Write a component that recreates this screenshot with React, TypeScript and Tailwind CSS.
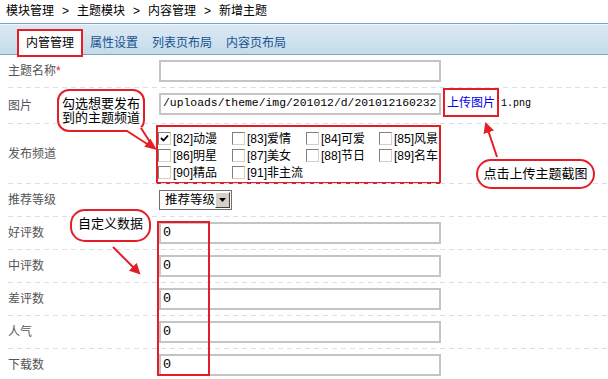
import React from 'react';

const RED = '#e41e26';

const channels: [string, string, boolean][] = [
  ['[82]', '动漫', true],
  ['[83]', '爱情', false],
  ['[84]', '可爱', false],
  ['[85]', '风景', false],
  ['[86]', '明星', false],
  ['[87]', '美女', false],
  ['[88]', '节日', false],
  ['[89]', '名车', false],
  ['[90]', '精品', false],
  ['[91]', '非主流', false],
];

function Sep() {
  return <div className="h-px ml-[8px] bg-[repeating-linear-gradient(90deg,#d5e1eb_0_5px,transparent_5px_9px)]" />;
}

function Label({ children }: { children: React.ReactNode }) {
  return <div className="w-[159px] shrink-0 pl-[8px] text-[12px] leading-[16px] text-[#555]">{children}</div>;
}

function TextInput({ value = '', big = false }: { value?: string; big?: boolean }) {
  return (
    <div
      className={
        big
          ? "w-[282px] h-[22px] border-2 border-[#c4c4c4] bg-white flex items-center pl-[2px] overflow-hidden whitespace-nowrap font-['Liberation_Mono',monospace] text-[13.5px] text-black"
          : "w-[282px] h-[22px] border-2 border-[#c4c4c4] bg-white flex items-center pl-[2px] overflow-hidden whitespace-nowrap font-['Liberation_Mono',monospace] text-[11.4px] text-black"
      }
    >
      {value}
    </div>
  );
}

function Checkbox({ checked }: { checked: boolean }) {
  return (
    <span className="w-[13px] h-[13px] shrink-0 bg-white border border-t-[#808080] border-l-[#808080] border-r-[#d4d0c8] border-b-[#d4d0c8] flex items-center justify-center">
      {checked && (
        <svg width="9" height="9" viewBox="0 0 9 9">
          <path d="M1 4 L3.5 6.5 L8 1.5" stroke="#000" strokeWidth="1.8" fill="none" />
        </svg>
      )}
    </span>
  );
}

export default function App() {
  return (
    <div className="relative w-[608px] h-[379px] overflow-hidden bg-white font-['Liberation_Sans','Noto_Sans_CJK_SC',sans-serif]">
      {/* Breadcrumb */}
      <div className="h-[23px] pl-[6px] pt-[3px] flex items-start gap-[8px] text-[12px] leading-[16px] text-black">
        <span>模块管理</span>
        <span>&gt;</span>
        <span>主题模块</span>
        <span>&gt;</span>
        <span>内容管理</span>
        <span>&gt;</span>
        <span>新增主题</span>
      </div>

      {/* Tabs */}
      <div className="h-[32px] border-y border-[#7ca4c2] bg-[linear-gradient(#dce9f5,#c4dbe9)] shadow-[inset_0_1px_0_#eef5fb] flex items-start pt-[5px] pl-[17px] text-[12px] leading-[16px]">
        <div className="relative z-10 h-[28px] px-[7px] flex items-center bg-white border-2 border-[#e41e26] text-black">内管管理</div>
        <div className="h-[28px] px-[7px] flex items-center text-[#17528f]">属性设置</div>
        <div className="h-[28px] px-[7px] flex items-center text-[#17528f]">列表页布局</div>
        <div className="h-[28px] px-[7px] flex items-center text-[#17528f]">内容页布局</div>
      </div>

      {/* Form */}
      <div className="flex flex-col">
        <div className="h-[32px] flex items-center">
          <Label>
            主题名称<span className="text-[#e41e26]">*</span>
          </Label>
          <TextInput />
        </div>
        <Sep />

        <div className="h-[35px] flex items-start">
          <div className="pt-[10px]">
            <Label>图片</Label>
          </div>
          <div className="mt-[5px]">
            <TextInput value="/uploads/theme/img/201012/d/201012160232" />
          </div>
          <div className="ml-[2px] h-[29px] px-[2px] border-2 border-[#e41e26] flex items-center text-[12px] text-[#0000ee]">上传图片</div>
          <div className="ml-[2px] pt-[9px] font-['Liberation_Mono',monospace] text-[10px] leading-[14px] text-black">1.png</div>
        </div>
        <Sep />

        <div className="h-[59px] flex items-center">
          <Label>发布频道</Label>
          <div className="self-start -ml-[3px] mt-[1px] w-[285px] h-[59px] border-2 border-[#e41e26] grid grid-cols-[74px_74px_73px_60px] content-start pt-[3px] overflow-hidden">
            {channels.map(([code, name, checked]) => (
              <div key={code} className="h-[17px] flex items-center gap-[2px] whitespace-nowrap text-[12px] leading-[14px] text-black">
                <Checkbox checked={checked} />
                <span>
                  {code}
                  {name}
                </span>
              </div>
            ))}
          </div>
        </div>
        <Sep />

        <div className="h-[32px] flex items-center">
          <Label>推荐等级</Label>
          <div className="w-[73px] h-[20px] border border-[#6f6f6f] bg-white flex items-center justify-between pl-[5px] pr-[1px]">
            <span className="text-[12.5px] leading-[14px] text-black">推荐等级</span>
            <span className="w-[15px] h-[16px] bg-[#d4d0c8] border border-t-white border-l-white border-r-[#404040] border-b-[#404040] flex items-center justify-center">
              <svg width="7" height="4" viewBox="0 0 7 4">
                <path d="M0 0 H7 L3.5 4 Z" fill="#000" />
              </svg>
            </span>
          </div>
        </div>
        <Sep />

        {['好评数', '中评数', '差评数', '人气', '下载数'].map((l, i) => (
          <React.Fragment key={l}>
            <div className="h-[32px] flex items-center">
              <Label>{l}</Label>
              <TextInput value="0" big />
            </div>
            {i < 4 && <Sep />}
          </React.Fragment>
        ))}
      </div>

      {/* Annotation: red box around the number inputs */}
      <div className="absolute left-[157px] top-[221px] w-[53px] h-[155px] border-2 border-[#e41e26]" />

      {/* Arrows */}
      <svg className="absolute left-0 top-0 pointer-events-none" width="608" height="379">
        <defs>
          <marker id="ah" viewBox="0 0 10 10" refX="8" refY="5" markerWidth="5.5" markerHeight="5.5" orient="auto">
            <path d="M0 0 L10 5 L0 10 Z" fill={RED} />
          </marker>
        </defs>
        <line x1="497" y1="157" x2="486" y2="124" stroke={RED} strokeWidth="2" markerEnd="url(#ah)" />
        <line x1="113" y1="247" x2="139" y2="273" stroke={RED} strokeWidth="2" markerEnd="url(#ah)" />
      </svg>

      {/* Callout bubbles */}
      <div className="absolute left-[57px] top-[89px] w-[88px] h-[43px] rounded-[12px] border-2 border-[#e41e26] bg-white flex flex-col items-center justify-center text-[13px] leading-[14px] text-black">
        <span>勾选想要发布</span>
        <span>到的主题频道</span>
      </div>
      <div className="absolute left-[476px] top-[159px] w-[119px] h-[30px] rounded-full border-2 border-[#e41e26] bg-white flex items-center justify-center text-[13px] leading-[14px] text-black">
        点击上传主题截图
      </div>
      <div className="absolute left-[70px] top-[209px] w-[81px] h-[33px] rounded-[15px] border-2 border-[#e41e26] bg-white flex items-start justify-center pt-[5px] text-[13px] leading-[16px] text-black">
        自定义数据
      </div>

      {/* Tail of the first bubble */}
      <svg className="absolute left-0 top-0 pointer-events-none" width="608" height="379">
        <path d="M127.5 129.5 L128.5 133 L147 143 L143 128 L140 126.5 Z" fill="#fff" />
        <line x1="127" y1="131" x2="148" y2="144.5" stroke={RED} strokeWidth="2" />
        <line x1="140.8" y1="127.8" x2="150" y2="142" stroke={RED} strokeWidth="2" />
        <path d="M157 150 L144.4 146.8 L150.4 138.8 Z" fill={RED} />
      </svg>
    </div>
  );
}
